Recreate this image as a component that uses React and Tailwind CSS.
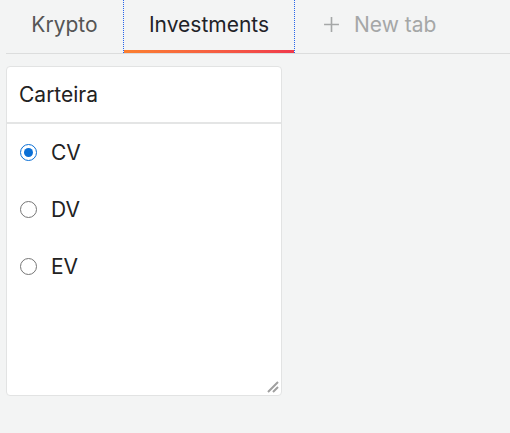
import React, { useState } from 'react';

const options = ['CV', 'DV', 'EV'];

function Radio({ checked }) {
  return (
    <span
      className={`flex h-[17px] w-[17px] items-center justify-center rounded-full border-[1.5px] ${
        checked ? 'border-[#0a6fd6]' : 'border-[#767676]'
      } bg-white`}
    >
      {checked && <span className="h-[9px] w-[9px] rounded-full bg-[#0a6fd6]" />}
    </span>
  );
}

export default function App() {
  const [selected, setSelected] = useState('CV');

  return (
    <div className="h-[433px] w-[510px] bg-[#f3f4f4] font-['Inter',sans-serif] text-[#222]">
      {/* tabs */}
      <div className="ml-[6px] flex h-[54px] items-stretch border-b border-[#dcdddd] text-[21px]">
        <div className="flex w-[117px] items-center justify-center pb-1 text-[#555]">Krypto</div>
        <div className="relative flex w-[172px] items-center justify-center border-x border-dotted border-[#2563eb] pb-1 text-[#1f2328]">
          Investments
          <span className="absolute bottom-0 left-0 right-0 h-[3px] bg-gradient-to-r from-[#fb7f2f] to-[#f0394b]" />
        </div>
        <div className="flex items-center gap-[14px] pb-1 pl-[28px] text-[#a5a7a7]">
          <svg width="17" height="17" viewBox="0 0 16 16" className="text-[#a5a7a7]">
            <path d="M8 1v14M1 8h14" stroke="currentColor" strokeWidth="1.5" />
          </svg>
          New tab
        </div>
      </div>

      {/* card */}
      <div className="relative ml-[6px] mt-3 flex h-[330px] w-[276px] flex-col rounded border border-[#e2e3e3] bg-white">
        <div className="flex h-[57px] items-center border-b-2 border-[#e4e5e5] px-3 text-[21px]">Carteira</div>
        <div className="flex flex-col">
          {options.map((o) => (
            <label
              key={o}
              onClick={() => setSelected(o)}
              className="flex h-[57px] cursor-pointer items-center gap-[14px] pl-[13px] text-[21px]"
            >
              <Radio checked={selected === o} />
              <span>{o}</span>
            </label>
          ))}
        </div>
        <svg width="14" height="14" viewBox="0 0 14 14" className="absolute bottom-[2px] right-[2px]">
          <path d="M13 3L3 13M13 8L8 13" stroke="#a0a0a0" strokeWidth="2" />
        </svg>
      </div>
    </div>
  );
}
